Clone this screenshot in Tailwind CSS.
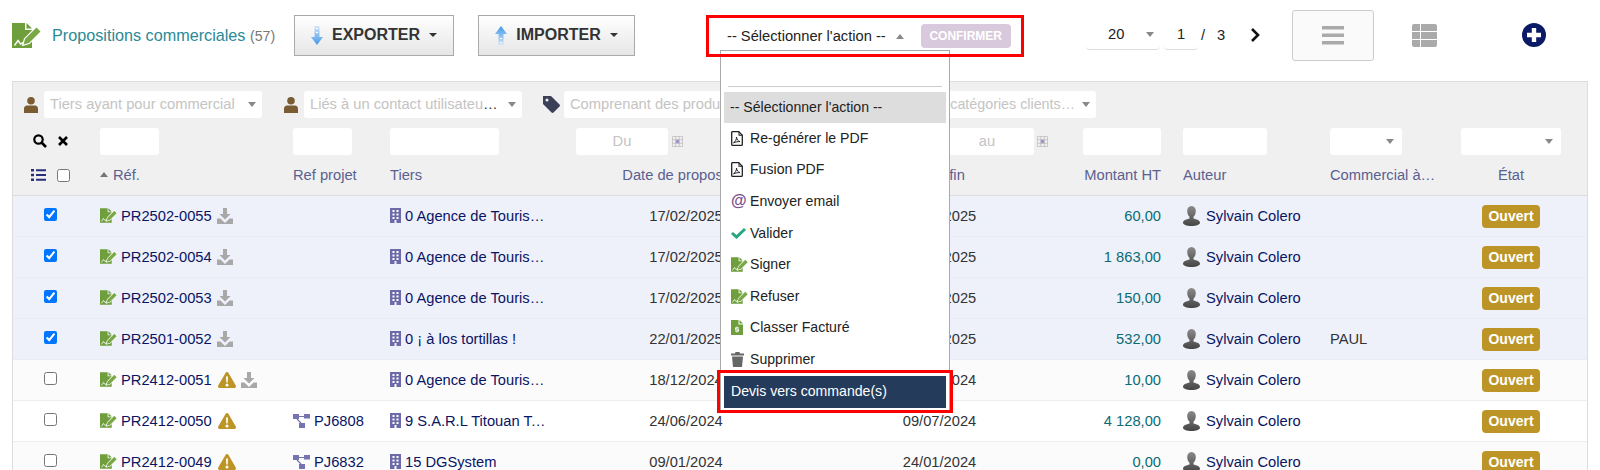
<!doctype html>
<html lang="fr">
<head>
    <meta charset="UTF-8" />
    <title>Propositions commerciales</title>
    <script src="https://cdn.jsdelivr.net/npm/@tailwindcss/browser@4"></script>
</head>
<body class="relative h-[470px] overflow-hidden bg-white font-['Liberation_Sans',Arial,sans-serif] text-[14.7px] text-[#333]">
    <!-- Icons -->
    <svg class="absolute h-0 w-0">
        <defs>
            <linearGradient id="bust" x1="0" y1="0" x2="0" y2="1"><stop offset="0" stop-color="#8a8a8a"/><stop offset="1" stop-color="#454545"/></linearGradient>
            <linearGradient id="arrowDown" x1="0" y1="0" x2="0" y2="1"><stop offset="0" stop-color="#d4e6f6"/><stop offset="1" stop-color="#3f97ea"/></linearGradient>
            <linearGradient id="arrowUp" x1="0" y1="1" x2="0" y2="0"><stop offset="0" stop-color="#d4e6f6"/><stop offset="1" stop-color="#3f97ea"/></linearGradient>
        </defs>
        <symbol id="propal" viewBox="0 0 29 25">
            <path fill="#6f9e3c" d="M0 0h13v7h7v18H0z"/>
            <path fill="#6f9e3c" d="M14.500 0l5.500 5.500h-5.500z"/>
            <path fill="#7aa845" stroke="#fff" stroke-width="2.400" paint-order="stroke" d="M24.500 4.500l4 4L17 20l-5.500 1.500L13 16z"/>
            <path fill="none" stroke="#fff" stroke-width="1.400" d="M2.500 22.500l3.500-5 2.500 3.500 3-1.500"/>
        </symbol>
        <symbol id="download" viewBox="0 0 16 16">
            <path fill="#a8a8a8" d="M6 0h4v6h3.500L8 11.500 2.500 6H6z"/>
            <path fill="#a8a8a8" d="M0 10.500h3.500L8 15l4.500-4.500H16V16H0z"/>
        </symbol>
        <symbol id="warning" viewBox="0 0 18 16">
            <path fill="#bc9526" d="M9 0c.700 0 1.200.400 1.500 1l7.300 12.500c.500 1-.200 2.500-1.500 2.500H1.700C.400 16-.300 14.500.200 13.500L7.500 1C7.800.400 8.300 0 9 0z"/>
            <path fill="#fff" d="M8 4.500h2l-.300 6h-1.400zM9 11.500a1.500 1.500 0 1 1 0 3 1.500 1.500 0 0 1 0-3z"/>
        </symbol>
        <symbol id="project" viewBox="0 0 17 14">
            <path fill="#7674b0" d="M0 0h6v5H0zM11 0h6v4.500h-6zM6 9h6v5H6z"/>
            <path fill="none" stroke="#7674b0" stroke-width="1.200" d="M6 2.500h5M4 5l4 4"/>
        </symbol>
        <symbol id="building" viewBox="0 0 11 15">
            <path fill="#6c6aa8" d="M0 0h11v15H6.500v-3h-2v3H0z"/>
            <path fill="#fff" d="M2.500 2h2v2h-2zM6.500 2h2v2h-2zM2.500 5.500h2v2h-2zM6.500 5.500h2v2h-2zM2.500 9h2v2h-2zM6.500 9h2v2h-2z"/>
        </symbol>
        <symbol id="author" viewBox="0 0 17 20">
            <path fill="url(#bust)" d="M8.500 0c2.800 0 4.300 2.200 4.300 5 0 2.500-1 4.800-2.300 5.800v1.700c2 .7 6.500 1.400 6.500 4.300 0 1.700-3.500 3.200-8.500 3.200S0 18.500 0 16.800c0-2.900 4.500-3.600 6.500-4.300v-1.700C5.200 9.800 4.200 7.500 4.200 5c0-2.800 1.500-5 4.300-5z"/>
        </symbol>
        <symbol id="person" viewBox="0 0 14 16">
            <circle cx="7" cy="3.800" r="3.800" fill="#7a5c33"/>
            <path fill="#7a5c33" d="M3 8.500h8c1.700 0 3 1.400 3 3V16H0v-4.500c0-1.600 1.300-3 3-3z"/>
        </symbol>
        <symbol id="tag" viewBox="0 0 17 17">
            <path fill="#3b3f58" d="M0 0h8l8.500 8.500c.600.600.600 1.400 0 2l-6 6c-.600.600-1.400.600-2 0L0 8z"/>
            <circle cx="4" cy="4" r="1.500" fill="#f0f0f0"/>
        </symbol>
        <symbol id="calendar" viewBox="0 0 12 12">
            <path fill="#a48ad4" d="M4 4h4v4H4z"/>
            <path fill="none" stroke="#bbb" stroke-width=".800" d="M.500.500h11v11H.500zM.500 4h11M.500 8h11M4 .500v11M8 .500v11"/>
        </symbol>
        <symbol id="pdf" viewBox="0 0 12 15">
            <path fill="none" stroke="#222" stroke-width="1.300" d="M.700 1.600q0-1 1-1h6l3.600 3.600v9.200q0 1-1 1H1.700q-1 0-1-1z"/>
            <path fill="#222" d="M7.500.700v4h4v-1h-3v-3z"/>
            <path fill="none" stroke="#222" d="M2.500 11.800c2-1 3-3.500 3-5.800 .3 2.500 1.500 4 3.500 4.600-2 0-4.500.300-6.500 1.200z"/>
        </symbol>
        <symbol id="invoice" viewBox="0 0 12 15">
            <path fill="#6f9e3c" d="M0 0h7.500v4.500H12V15H0z"/>
            <path fill="#6f9e3c" d="M8.500 0L12 3.500H8.500z"/>
            <path fill="#fff" d="M5.500 6.500h1v1h1.500v1H5.500v.7h2.500v2.300h-1.500v1h-1v-1H4v-1h2.500v-.8H4V7.500h1.500z"/>
        </symbol>
        <symbol id="trash" viewBox="0 0 13 15">
            <path fill="#666" d="M0 1.500h4l.500-1.500h4l.500 1.500h4V3.500H0zM1 4.500h11l-1 10.500H2z"/>
        </symbol>
    </svg>

    <!-- Top bar -->
    <div class="flex h-[70px] items-center">
        <svg class="ml-[12px] h-[25px] w-[29px]"><use href="#propal"/></svg>
        <div class="ml-[11px] w-[242px] whitespace-nowrap text-[16.200px] text-[#2b8a97]">Propositions commerciales <span class="text-[14.200px] text-[#777]">(57)</span></div>
        <button class="flex h-[41px] w-[160px] items-center justify-center gap-[5px] border border-[#aaa] bg-linear-to-b from-white to-[#e6e6e6] text-[16px] font-bold text-[#333]">
            <svg class="mr-[4px] h-[19px] w-[12px]" viewBox="0 0 12 19"><path fill="url(#arrowDown)" d="M3.500 0h5v11H12l-6 8-6-8h3.500z"/><path fill="#fff" d="M5 2h2v1H5zM5 6h2v1H5z"/></svg>
            EXPORTER
            <span class="ml-[4px] h-0 w-0 border-x-[4px] border-t-[4px] border-x-transparent border-t-[#333]"></span>
        </button>
        <button class="ml-[24px] flex h-[41px] w-[157px] items-center justify-center gap-[5px] border border-[#aaa] bg-linear-to-b from-white to-[#e6e6e6] text-[16px] font-bold text-[#333]">
            <svg class="mr-[4px] h-[19px] w-[12px]" viewBox="0 0 12 19"><path fill="url(#arrowUp)" d="M6 0l6 8H8.500v11h-5V8H0z"/><path fill="#fff" d="M5 12h2v1H5zM5 16h2v1H5z"/></svg>
            IMPORTER
            <span class="ml-[4px] h-0 w-0 border-x-[4px] border-t-[4px] border-x-transparent border-t-[#333]"></span>
        </button>

        <!-- Mass action, red frame drawn over the open list -->
        <div class="relative z-20 mt-[2px] ml-[71px] flex h-[42px] w-[318px] items-center border-[3px] border-[#f00] pl-[18px]">
            <span class="whitespace-nowrap text-[14.700px] text-[#222]">-- Sélectionner l'action --</span>
            <span class="ml-[10px] h-0 w-0 border-x-[4px] border-b-[5px] border-x-transparent border-b-[#888]"></span>
            <span class="ml-[17px] flex h-[24px] w-[90px] items-center justify-center rounded-[4px] bg-[#d9c9dc] text-[12px] font-bold text-white">CONFIRMER</span>
        </div>

        <div class="ml-[62px] flex h-[30px] w-[74px] items-center justify-between rounded-b border-b border-[#ddd] pr-[6px] pl-[22px]">
            <span class="text-[#222]">20</span>
            <span class="h-0 w-0 border-x-[4px] border-t-[5px] border-x-transparent border-t-[#888]"></span>
        </div>
        <div class="ml-[4px] flex h-[30px] w-[34px] items-center justify-center rounded-b border-b border-[#ddd] text-[#222]">1</div>
        <span class="ml-[3px] text-[#222]">/</span>
        <span class="ml-[12px] text-[#222]">3</span>
        <svg class="ml-[25px] h-[14px] w-[10px]" viewBox="0 0 10 14"><path fill="none" stroke="#111" stroke-width="2.600" d="M2 1l6 6-6 6"/></svg>
        <div class="ml-[32px] flex h-[51px] w-[82px] items-center justify-center rounded-[3px] border border-[#ccc] bg-[#fafafa]">
            <svg class="h-[19px] w-[22px]" viewBox="0 0 22 19"><path fill="#aaa" d="M0 0h22v3.500H0zM0 7.500h22V11H0zM0 15h22v3.500H0z"/></svg>
        </div>
        <svg class="ml-[38px] h-[23px] w-[25px]" viewBox="0 0 25 23"><path fill="#aaa" d="M2 0h6v7H0V2q0-2 2-2zM9 0h14q2 0 2 2v5H9zM0 8h8v7H0zM9 8h16v7H9zM0 16h8v7H2q-2 0-2-2zM9 16h16v5q0 2-2 2H9z"/></svg>
        <svg class="ml-[85px] h-[24px] w-[24px]" viewBox="0 0 24 24"><circle cx="12" cy="12" r="12" fill="#0a1a66"/><path fill="#fff" d="M9.800 5h4.400v4.800H19v4.400h-4.800V19H9.800v-4.800H5V9.800h4.800z"/></svg>
    </div>

    <!-- Table -->
    <div class="mx-[12px] mt-[11px] border-x border-t border-[#ddd]">
        <div class="bg-[#f0f0f0]">
            <!-- Search filters -->
            <div class="flex h-[45px] items-center text-[#c4c4c4]">
                <svg class="ml-[11px] h-[16px] w-[14px]"><use href="#person"/></svg>
                <div class="ml-[6px] flex h-[27px] w-[218px] items-center justify-between rounded-[3px] bg-white pr-[6px] pl-[6px]">Tiers ayant pour commercial <span class="h-0 w-0 border-x-[4px] border-t-[5px] border-x-transparent border-t-[#888]"></span></div>
                <svg class="ml-[22px] h-[16px] w-[14px]"><use href="#person"/></svg>
                <div class="ml-[6px] flex h-[27px] w-[218px] items-center justify-between rounded-[3px] bg-white pr-[6px] pl-[6px]"><span>Liés à un contact utilisateu<span class="text-[#333]">…</span></span> <span class="h-0 w-0 border-x-[4px] border-t-[5px] border-x-transparent border-t-[#888]"></span></div>
                <svg class="ml-[21px] h-[17px] w-[17px]"><use href="#tag"/></svg>
                <div class="ml-[4px] flex h-[27px] w-[218px] items-center rounded-[3px] bg-white pl-[6px]">Comprenant des produits</div>
                <svg class="ml-[21px] h-[17px] w-[17px]"><use href="#tag"/></svg>
                <div class="ml-[4px] flex h-[27px] w-[272px] items-center justify-between rounded-[3px] bg-white pr-[6px] pl-[6px]"><span class="w-[245px] text-right text-[14.300px] whitespace-nowrap">Dans les catégories clients…</span> <span class="h-0 w-0 border-x-[4px] border-t-[5px] border-x-transparent border-t-[#888]"></span></div>
            </div>

            <!-- Column filters -->
            <div class="grid h-[28px] grid-cols-[87px_193px_97px_186px_220px_287px_100px_147px_131px_112px] items-center text-center text-[#c4c4c4]">
                <div class="flex items-center pl-[20px]">
                    <svg class="h-[14px] w-[14px]" viewBox="0 0 14 14"><circle cx="5.500" cy="5.500" r="4.200" fill="none" stroke="#000" stroke-width="2.200"/><path stroke="#000" stroke-width="2.600" d="M8.500 8.500l4.500 4.500"/></svg>
                    <svg class="ml-[11px] h-[10px] w-[10px]" viewBox="0 0 10 10"><path stroke="#000" stroke-width="2.600" d="M1 1l8 8M9 1L1 9"/></svg>
                </div>
                <div><div class="h-[27px] w-[59px] rounded-[3px] bg-white"></div></div>
                <div><div class="h-[27px] w-[59px] rounded-[3px] bg-white"></div></div>
                <div><div class="h-[27px] w-[109px] rounded-[3px] bg-white"></div></div>
                <div class="flex items-center gap-[4px]"><div class="h-[27px] w-[92px] rounded-[3px] bg-white leading-[27px]">Du</div><svg class="h-[11px] w-[11px]"><use href="#calendar"/></svg></div>
                <div class="flex items-center justify-end gap-[3px] pr-[35px]"><div class="h-[27px] w-[94px] rounded-[3px] bg-white leading-[27px]">au</div><svg class="h-[11px] w-[11px]"><use href="#calendar"/></svg></div>
                <div><div class="h-[27px] w-[78px] rounded-[3px] bg-white"></div></div>
                <div><div class="h-[27px] w-[84px] rounded-[3px] bg-white"></div></div>
                <div><div class="flex h-[27px] w-[72px] items-center justify-end rounded-[3px] bg-white pr-[8px]"><span class="h-0 w-0 border-x-[4px] border-t-[5px] border-x-transparent border-t-[#888]"></span></div></div>
                <div><div class="flex h-[27px] w-[100px] items-center justify-end rounded-[3px] bg-white pr-[8px]"><span class="h-0 w-0 border-x-[4px] border-t-[5px] border-x-transparent border-t-[#888]"></span></div></div>
            </div>

            <!-- Column titles -->
            <div class="grid h-[41px] grid-cols-[87px_193px_97px_186px_220px_287px_100px_147px_131px_112px] items-center border-b border-[#ddd] text-[#5a6090]">
                <div class="flex items-center pl-[18px]">
                    <svg class="h-[12px] w-[15px]" viewBox="0 0 15 12"><path fill="#2a2f7a" d="M0 0h3v2.500H0zM5 .300h10v2H5zM0 4.700h3v2.500H0zM5 5h10v2H5zM0 9.500h3V12H0zM5 9.700h10v2H5z"/></svg>
                    <input type="checkbox" class="ml-[11px]" />
                </div>
                <div class="flex items-center"><span class="mr-[5px] h-0 w-0 border-x-[4px] border-b-[5px] border-x-transparent border-b-[#777]"></span>Réf.</div>
                <div>Ref projet</div>
                <div>Tiers</div>
                <div class="text-center">Date de proposition</div>
                <div class="text-center">Date fin</div>
                <div class="pr-[22px] text-right">Montant HT</div>
                <div>Auteur</div>
                <div>Commercial à…</div>
                <div class="w-[100px] text-center">État</div>
            </div>
        </div>

        <!-- Rows -->
        <div class="grid h-[41px] grid-cols-[87px_193px_97px_186px_220px_287px_100px_147px_131px_112px] items-center border-b border-[#e9ecf4] bg-[#eef1fa]">
            <div class="pl-[31px]"><input type="checkbox" checked class="-mt-[4px] block" /></div>
            <div class="flex items-center"><svg class="mr-[4px] h-[15px] w-[17px]"><use href="#propal"/></svg><span class="text-[#0a1464]">PR2502-0055</span><svg class="ml-[5px] h-[16px] w-[16px]"><use href="#download"/></svg></div>
            <div></div>
            <div class="flex items-center"><svg class="mr-[4px] h-[15px] w-[11px] shrink-0"><use href="#building"/></svg><span class="w-[144px] truncate text-[#0a1464]">0 Agence de Tourisme</span></div>
            <div class="text-center">17/02/2025</div>
            <div class="text-center">17/02/2025</div>
            <div class="pr-[22px] text-right text-[#0b6b75]">60,00</div>
            <div class="flex items-center"><svg class="mr-[6px] h-[20px] w-[17px]"><use href="#author"/></svg><span class="text-[#0a1464]">Sylvain Colero</span></div>
            <div></div>
            <div class="flex w-[100px] justify-center"><span class="flex h-[23px] w-[58px] items-center justify-center rounded-[4px] bg-[#bc9526] text-[14px] font-bold text-white">Ouvert</span></div>
        </div>
        <div class="grid h-[41px] grid-cols-[87px_193px_97px_186px_220px_287px_100px_147px_131px_112px] items-center border-b border-[#e9ecf4] bg-[#eef1fa]">
            <div class="pl-[31px]"><input type="checkbox" checked class="-mt-[4px] block" /></div>
            <div class="flex items-center"><svg class="mr-[4px] h-[15px] w-[17px]"><use href="#propal"/></svg><span class="text-[#0a1464]">PR2502-0054</span><svg class="ml-[5px] h-[16px] w-[16px]"><use href="#download"/></svg></div>
            <div></div>
            <div class="flex items-center"><svg class="mr-[4px] h-[15px] w-[11px] shrink-0"><use href="#building"/></svg><span class="w-[144px] truncate text-[#0a1464]">0 Agence de Tourisme</span></div>
            <div class="text-center">17/02/2025</div>
            <div class="text-center">17/02/2025</div>
            <div class="pr-[22px] text-right text-[#0b6b75]">1 863,00</div>
            <div class="flex items-center"><svg class="mr-[6px] h-[20px] w-[17px]"><use href="#author"/></svg><span class="text-[#0a1464]">Sylvain Colero</span></div>
            <div></div>
            <div class="flex w-[100px] justify-center"><span class="flex h-[23px] w-[58px] items-center justify-center rounded-[4px] bg-[#bc9526] text-[14px] font-bold text-white">Ouvert</span></div>
        </div>
        <div class="grid h-[41px] grid-cols-[87px_193px_97px_186px_220px_287px_100px_147px_131px_112px] items-center border-b border-[#e9ecf4] bg-[#eef1fa]">
            <div class="pl-[31px]"><input type="checkbox" checked class="-mt-[4px] block" /></div>
            <div class="flex items-center"><svg class="mr-[4px] h-[15px] w-[17px]"><use href="#propal"/></svg><span class="text-[#0a1464]">PR2502-0053</span><svg class="ml-[5px] h-[16px] w-[16px]"><use href="#download"/></svg></div>
            <div></div>
            <div class="flex items-center"><svg class="mr-[4px] h-[15px] w-[11px] shrink-0"><use href="#building"/></svg><span class="w-[144px] truncate text-[#0a1464]">0 Agence de Tourisme</span></div>
            <div class="text-center">17/02/2025</div>
            <div class="text-center">17/02/2025</div>
            <div class="pr-[22px] text-right text-[#0b6b75]">150,00</div>
            <div class="flex items-center"><svg class="mr-[6px] h-[20px] w-[17px]"><use href="#author"/></svg><span class="text-[#0a1464]">Sylvain Colero</span></div>
            <div></div>
            <div class="flex w-[100px] justify-center"><span class="flex h-[23px] w-[58px] items-center justify-center rounded-[4px] bg-[#bc9526] text-[14px] font-bold text-white">Ouvert</span></div>
        </div>
        <div class="grid h-[41px] grid-cols-[87px_193px_97px_186px_220px_287px_100px_147px_131px_112px] items-center border-b border-[#e9ecf4] bg-[#eef1fa]">
            <div class="pl-[31px]"><input type="checkbox" checked class="-mt-[4px] block" /></div>
            <div class="flex items-center"><svg class="mr-[4px] h-[15px] w-[17px]"><use href="#propal"/></svg><span class="text-[#0a1464]">PR2501-0052</span><svg class="ml-[5px] h-[16px] w-[16px]"><use href="#download"/></svg></div>
            <div></div>
            <div class="flex items-center"><svg class="mr-[4px] h-[15px] w-[11px] shrink-0"><use href="#building"/></svg><span class="w-[144px] truncate text-[#0a1464]">0 ¡ à los tortillas !</span></div>
            <div class="text-center">22/01/2025</div>
            <div class="text-center">22/01/2025</div>
            <div class="pr-[22px] text-right text-[#0b6b75]">532,00</div>
            <div class="flex items-center"><svg class="mr-[6px] h-[20px] w-[17px]"><use href="#author"/></svg><span class="text-[#0a1464]">Sylvain Colero</span></div>
            <div>PAUL</div>
            <div class="flex w-[100px] justify-center"><span class="flex h-[23px] w-[58px] items-center justify-center rounded-[4px] bg-[#bc9526] text-[14px] font-bold text-white">Ouvert</span></div>
        </div>
        <div class="grid h-[41px] grid-cols-[87px_193px_97px_186px_220px_287px_100px_147px_131px_112px] items-center border-b border-[#eee] bg-[#fbfbfb]">
            <div class="pl-[31px]"><input type="checkbox" class="-mt-[4px] block" /></div>
            <div class="flex items-center"><svg class="mr-[4px] h-[15px] w-[17px]"><use href="#propal"/></svg><span class="text-[#0a1464]">PR2412-0051</span><svg class="ml-[6px] h-[16px] w-[18px]"><use href="#warning"/></svg><svg class="ml-[5px] h-[16px] w-[16px]"><use href="#download"/></svg></div>
            <div></div>
            <div class="flex items-center"><svg class="mr-[4px] h-[15px] w-[11px] shrink-0"><use href="#building"/></svg><span class="w-[144px] truncate text-[#0a1464]">0 Agence de Tourisme</span></div>
            <div class="text-center">18/12/2024</div>
            <div class="text-center">18/12/2024</div>
            <div class="pr-[22px] text-right text-[#0b6b75]">10,00</div>
            <div class="flex items-center"><svg class="mr-[6px] h-[20px] w-[17px]"><use href="#author"/></svg><span class="text-[#0a1464]">Sylvain Colero</span></div>
            <div></div>
            <div class="flex w-[100px] justify-center"><span class="flex h-[23px] w-[58px] items-center justify-center rounded-[4px] bg-[#bc9526] text-[14px] font-bold text-white">Ouvert</span></div>
        </div>
        <div class="grid h-[41px] grid-cols-[87px_193px_97px_186px_220px_287px_100px_147px_131px_112px] items-center border-b border-[#eee] bg-white">
            <div class="pl-[31px]"><input type="checkbox" class="-mt-[4px] block" /></div>
            <div class="flex items-center"><svg class="mr-[4px] h-[15px] w-[17px]"><use href="#propal"/></svg><span class="text-[#0a1464]">PR2412-0050</span><svg class="ml-[6px] h-[16px] w-[18px]"><use href="#warning"/></svg></div>
            <div class="flex items-center"><svg class="mr-[4px] h-[14px] w-[17px]"><use href="#project"/></svg><span class="text-[#0a1464]">PJ6808</span></div>
            <div class="flex items-center"><svg class="mr-[4px] h-[15px] w-[11px] shrink-0"><use href="#building"/></svg><span class="w-[144px] truncate text-[#0a1464]">9 S.A.R.L Titouan Tourisme</span></div>
            <div class="text-center">24/06/2024</div>
            <div class="text-center">09/07/2024</div>
            <div class="pr-[22px] text-right text-[#0b6b75]">4 128,00</div>
            <div class="flex items-center"><svg class="mr-[6px] h-[20px] w-[17px]"><use href="#author"/></svg><span class="text-[#0a1464]">Sylvain Colero</span></div>
            <div></div>
            <div class="flex w-[100px] justify-center"><span class="flex h-[23px] w-[58px] items-center justify-center rounded-[4px] bg-[#bc9526] text-[14px] font-bold text-white">Ouvert</span></div>
        </div>
        <div class="grid h-[41px] grid-cols-[87px_193px_97px_186px_220px_287px_100px_147px_131px_112px] items-center border-b border-[#eee] bg-[#fbfbfb]">
            <div class="pl-[31px]"><input type="checkbox" class="-mt-[4px] block" /></div>
            <div class="flex items-center"><svg class="mr-[4px] h-[15px] w-[17px]"><use href="#propal"/></svg><span class="text-[#0a1464]">PR2412-0049</span><svg class="ml-[6px] h-[16px] w-[18px]"><use href="#warning"/></svg></div>
            <div class="flex items-center"><svg class="mr-[4px] h-[14px] w-[17px]"><use href="#project"/></svg><span class="text-[#0a1464]">PJ6832</span></div>
            <div class="flex items-center"><svg class="mr-[4px] h-[15px] w-[11px] shrink-0"><use href="#building"/></svg><span class="w-[144px] truncate text-[#0a1464]">15 DGSystem</span></div>
            <div class="text-center">09/01/2024</div>
            <div class="text-center">24/01/2024</div>
            <div class="pr-[22px] text-right text-[#0b6b75]">0,00</div>
            <div class="flex items-center"><svg class="mr-[6px] h-[20px] w-[17px]"><use href="#author"/></svg><span class="text-[#0a1464]">Sylvain Colero</span></div>
            <div></div>
            <div class="flex w-[100px] justify-center"><span class="flex h-[23px] w-[58px] items-center justify-center rounded-[4px] bg-[#bc9526] text-[14px] font-bold text-white">Ouvert</span></div>
        </div>
    </div>

    <!-- Open action list -->
    <div class="absolute top-[50px] left-[720px] z-10 w-[230px] border border-[#aaa] bg-white px-[3px] pb-[2px] text-[14.100px] text-[#222]">
        <div class="mx-[4px] h-[36px] border-b border-[#ccc]"></div>
        <div class="mt-[5px] flex h-[31px] items-center bg-[#ddd] pl-[6px]">-- Sélectionner l'action --</div>
        <div class="flex h-[31.600px] items-center pb-[1px] pl-[7px]"><svg class="mr-[7px] h-[15px] w-[12px]"><use href="#pdf"/></svg>Re-générer le PDF</div>
        <div class="flex h-[31.600px] items-center pb-[1px] pl-[7px]"><svg class="mr-[7px] h-[15px] w-[12px]"><use href="#pdf"/></svg>Fusion PDF</div>
        <div class="flex h-[31.600px] items-center pb-[1px] pl-[7px]"><span class="mr-[5px] w-[14px] text-[16px] leading-none font-bold text-[#7b4f8e]">@</span>Envoyer email</div>
        <div class="flex h-[31.600px] items-center pb-[1px] pl-[7px]"><svg class="mr-[4px] h-[12px] w-[15px]" viewBox="0 0 15 12"><path fill="none" stroke="#25a580" stroke-width="3" d="M1 6l4.500 4L14 2"/></svg>Valider</div>
        <div class="flex h-[31.600px] items-center pb-[1px] pl-[7px]"><svg class="mr-[2px] h-[15px] w-[17px]"><use href="#propal"/></svg>Signer</div>
        <div class="flex h-[31.600px] items-center pb-[1px] pl-[7px]"><svg class="mr-[2px] h-[15px] w-[17px]"><use href="#propal"/></svg>Refuser</div>
        <div class="flex h-[31.600px] items-center pb-[1px] pl-[7px]"><svg class="mr-[7px] h-[15px] w-[12px]"><use href="#invoice"/></svg>Classer Facturé</div>
        <div class="flex h-[31.600px] items-center pb-[1px] pl-[7px]"><svg class="mr-[6px] h-[15px] w-[13px]"><use href="#trash"/></svg>Supprimer</div>
        <div class="flex h-[32px] items-center bg-[#253b5b] pl-[7px] text-white">Devis vers commande(s)</div>
    </div>
    <div class="absolute top-[370px] left-[717px] z-20 h-[43px] w-[236px] border-[3px] border-[#f00]"></div>
</body>
</html>
